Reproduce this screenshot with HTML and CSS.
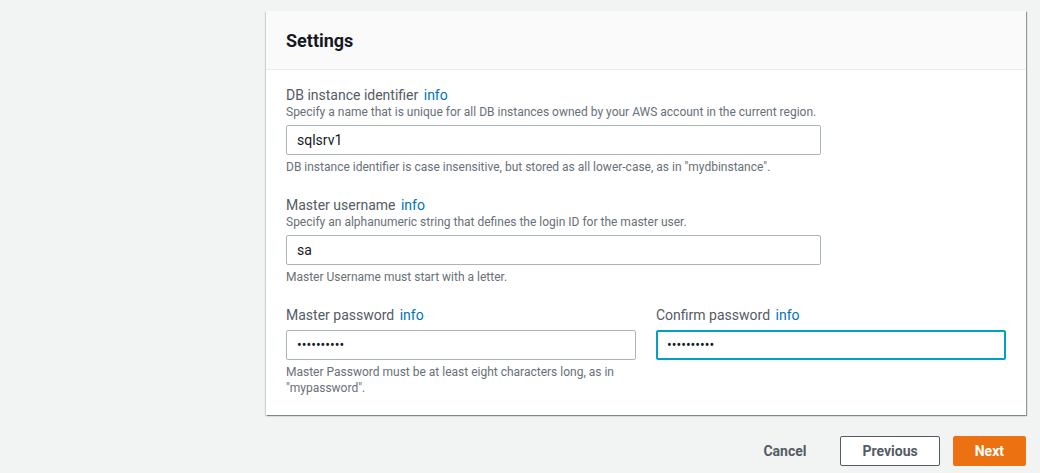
FILE: index.html
```html
<!DOCTYPE html>
<html lang="en">
<head>
    <meta charset="UTF-8">
    <meta name="viewport" content="width=device-width, initial-scale=1.0">
    <title>Settings</title>
    <link rel="stylesheet" href="styles.css">
</head>
<body>

    <div class="page">
        <div class="panel">
            <div class="panel-header">
                <h2>Settings</h2>
            </div>
            <div class="panel-body">
                <div class="field">
                    <label class="label" for="dbid">DB instance identifier <a href="#" class="info">info</a></label>
                    <div class="description">Specify a name that is unique for all DB instances owned by your AWS account in the current region.</div>
                    <input id="dbid" class="input wide" type="text" value="sqlsrv1">
                    <div class="hint">DB instance identifier is case insensitive, but stored as all lower-case, as in "mydbinstance".</div>
                </div>

                <div class="field">
                    <label class="label" for="user">Master username <a href="#" class="info">info</a></label>
                    <div class="description">Specify an alphanumeric string that defines the login ID for the master user.</div>
                    <input id="user" class="input wide" type="text" value="sa">
                    <div class="hint">Master Username must start with a letter.</div>
                </div>

                <div class="field-row">
                    <div class="field">
                        <label class="label" for="pw">Master password <a href="#" class="info">info</a></label>
                        <input id="pw" class="input" type="password" value="abcdefghij">
                        <div class="hint">Master Password must be at least eight characters long, as in "mypassword".</div>
                    </div>
                    <div class="field">
                        <label class="label" for="pw2">Confirm password <a href="#" class="info">info</a></label>
                        <input id="pw2" class="input focused" type="password" value="abcdefghij">
                    </div>
                </div>
            </div>
        </div>

        <div class="actions">
            <button class="btn-link">Cancel</button>
            <button class="btn">Previous</button>
            <button class="btn primary">Next</button>
        </div>
    </div>

</body>
</html>
```

FILE: styles.css
```css
* {
    box-sizing: border-box;
    margin: 0;
    padding: 0;
}

body {
    font-family: Roboto, "Liberation Sans", sans-serif;
    background-color: #f2f3f3;
    color: #16191f;
}

.page {
    width: 760px;
    margin-left: 266px;
    padding-top: 11px;
}

.panel {
    background-color: #fff;
    box-shadow: 1px 1px 1px rgba(0, 28, 36, 0.3), 1px 1px 1px 0 rgba(0, 28, 36, 0.15), -1px 1px 1px 0 rgba(0, 28, 36, 0.15);
}

.panel-header {
    height: 59px;
    padding: 0 20px;
    display: flex;
    align-items: center;
    background-color: #fafafa;
    border-bottom: 1px solid #eaeded;
}

.panel-header h2 {
    font-size: 18px;
    font-weight: 700;
    color: #16191f;
}

.panel-body {
    padding: 16px 20px 19px;
    display: flex;
    flex-direction: column;
    gap: 21px;
}

.field {
    display: flex;
    flex-direction: column;
}

.label {
    font-size: 14px;
    line-height: 18px;
    color: #545b64;
}

.info {
    color: #0073bb;
    text-decoration: none;
    margin-left: 2px;
}

.description {
    font-size: 12px;
    line-height: 16px;
    color: #687078;
    margin-bottom: 5px;
}

.input {
    height: 30px;
    padding: 0 10px;
    font-family: inherit;
    font-size: 14px;
    color: #16191f;
    border: 1px solid #aab7b8;
    border-radius: 2px;
    outline: none;
}

.wide {
    width: 535px;
}

.field-row .input {
    margin-top: 6px;
    width: 350px;
}

.input.focused {
    border: 2px solid #00a1c9;
    padding: 0 9px;
}

.hint {
    font-size: 12px;
    line-height: 16px;
    color: #687078;
    margin-top: 4px;
}

.field-row .hint {
    width: 380px;
    margin-right: -30px;
}

.field-row {
    display: flex;
    gap: 20px;
}

.actions {
    display: flex;
    justify-content: flex-end;
    align-items: center;
    gap: 13px;
    margin-top: 21px;
}

.btn, .btn-link {
    height: 30px;
    padding: 0 21px;
    font-family: inherit;
    font-size: 14px;
    font-weight: 700;
    color: #545b64;
    background-color: #fff;
    border: 1px solid #545b64;
    border-radius: 2px;
    cursor: pointer;
}

.btn-link {
    padding: 0;
    background: none;
    border: none;
    margin-right: 21px;
}

.btn.primary {
    background-color: #ec7211;
    border-color: #ec7211;
    color: #fff;
}
```
